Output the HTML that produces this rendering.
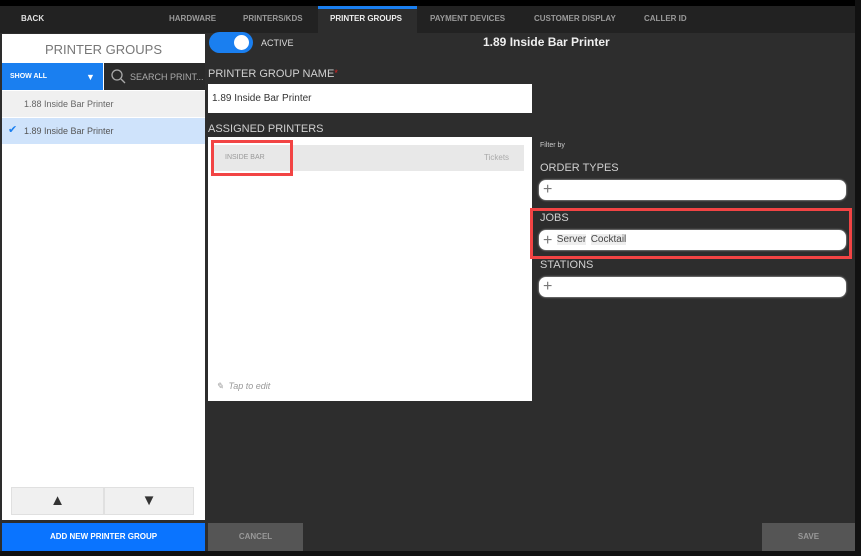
<!DOCTYPE html>
<html><head><style>
*{margin:0;padding:0;box-sizing:border-box}
body{width:861px;height:556px;background:#2d2d2d;font-family:"Liberation Sans",sans-serif;position:relative;overflow:hidden}
.a{position:absolute}
.nav{font-size:8px;font-weight:bold;color:#9a9a9a;top:14px}
.lbl{color:#d0d0d0;font-size:11px}
.pill{background:#fff;border-radius:7px;height:20px;color:#777;font-size:16px;line-height:19px;padding-left:4px;box-shadow:0 0 2px #ccc}
</style></head><body>
<div class="a" style="left:0;top:0;width:861px;height:6px;background:#000"></div>
<div class="a" style="left:0;top:6px;width:861px;height:27px;background:#222"></div>
<div class="a" style="left:855px;top:0;width:6px;height:556px;background:#111"></div>
<div class="a" style="left:0;top:551px;width:861px;height:5px;background:#111"></div>
<div class="a nav" style="left:21px;color:#e0e0e0">BACK</div>
<div class="a nav" style="left:169px">HARDWARE</div>
<div class="a nav" style="left:243px">PRINTERS/KDS</div>
<div class="a" style="left:318px;top:6px;width:99px;height:27px;background:#2d2d2d;border-top:3px solid #1a7ff0"></div>
<div class="a nav" style="left:330px;color:#eee">PRINTER GROUPS</div>
<div class="a nav" style="left:430px">PAYMENT DEVICES</div>
<div class="a nav" style="left:534px">CUSTOMER DISPLAY</div>
<div class="a nav" style="left:644px">CALLER ID</div>

<div class="a" style="left:2px;top:34px;width:203px;height:486px;background:#fff"></div>
<div class="a" style="left:2px;top:42px;width:203px;text-align:center;color:#777;font-size:13px">PRINTER GROUPS</div>
<div class="a" style="left:2px;top:63px;width:101px;height:27px;background:#1a7ff0;color:#fff;font-size:7px;font-weight:bold;padding:10px 0 0 8px">SHOW ALL<span style="position:absolute;left:84px;top:9px;font-size:9px">▼</span></div>
<div class="a" style="left:104px;top:63px;width:101px;height:27px;background:#2a2a2a;color:#aaa;font-size:9px;padding:9px 0 0 26px;white-space:nowrap;overflow:hidden">SEARCH PRINT...</div>
<svg class="a" style="left:110px;top:68px" width="16" height="16"><circle cx="7" cy="7" r="5" fill="none" stroke="#aaa" stroke-width="1.3"/><path d="M11 11l4 4" stroke="#aaa" stroke-width="1.3"/></svg>
<div class="a" style="left:2px;top:91px;width:203px;height:26px;background:#f0f0f0;color:#666;font-size:9px;padding:8px 0 0 22px">1.88 Inside Bar Printer</div>
<div class="a" style="left:2px;top:118px;width:203px;height:26px;background:#cfe3fb;color:#555;font-size:9px;padding:8px 0 0 22px">1.89 Inside Bar Printer</div>
<div class="a" style="left:8px;top:123px;color:#1a7ff0;font-size:11px">✔</div>
<div class="a" style="left:11px;top:487px;width:93px;height:28px;background:#f0f0f0;border:1px solid #e0e0e0;text-align:center;font-size:15px;color:#333;line-height:26px">▲</div>
<div class="a" style="left:104px;top:487px;width:90px;height:28px;background:#f0f0f0;border:1px solid #e0e0e0;text-align:center;font-size:15px;color:#333;line-height:26px">▼</div>
<div class="a" style="left:2px;top:523px;width:203px;height:28px;background:#0a74ff;color:#fff;font-size:8px;font-weight:bold;text-align:center;line-height:28px">ADD NEW PRINTER GROUP</div>
<div class="a" style="left:208px;top:523px;width:95px;height:28px;background:#555;color:#999;font-size:8px;font-weight:bold;text-align:center;line-height:28px">CANCEL</div>
<div class="a" style="left:762px;top:523px;width:93px;height:28px;background:#555;color:#999;font-size:8px;font-weight:bold;text-align:center;line-height:28px">SAVE</div>

<div class="a" style="left:209px;top:32px;width:44px;height:21px;border-radius:11px;background:#1a7ff0"></div>
<div class="a" style="left:234px;top:35px;width:15px;height:15px;border-radius:50%;background:#fff"></div>
<div class="a" style="left:261px;top:38px;color:#ddd;font-size:9px">ACTIVE</div>
<div class="a" style="left:483px;top:35px;color:#eee;font-size:12px;font-weight:bold">1.89 Inside Bar Printer</div>
<div class="a lbl" style="left:208px;top:68px">PRINTER GROUP NAME<span style="color:#d22;font-size:9px;vertical-align:top">*</span></div>
<div class="a" style="left:208px;top:84px;width:324px;height:29px;background:#fff;color:#333;font-size:10px;padding:9px 0 0 4px">1.89 Inside Bar Printer</div>
<div class="a lbl" style="left:208px;top:123px">ASSIGNED PRINTERS</div>
<div class="a" style="left:208px;top:137px;width:324px;height:264px;background:#fff"></div>
<div class="a" style="left:212px;top:145px;width:312px;height:26px;background:#e8e8e8"></div>
<div class="a" style="left:225px;top:154px;color:#999;font-size:7px">INSIDE BAR</div>
<div class="a" style="left:484px;top:153px;color:#aaa;font-size:8px">Tickets</div>
<div class="a" style="left:211px;top:140px;width:82px;height:36px;border:3px solid #f24444"></div>
<div class="a" style="left:216px;top:381px;color:#999;font-size:9px;font-style:italic">✎ &nbsp;Tap to edit</div>

<div class="a" style="left:540px;top:142px;color:#ccc;font-size:7px">Filter by</div>
<div class="a lbl" style="left:540px;top:162px">ORDER TYPES</div>
<div class="a pill" style="left:539px;top:180px;width:307px">+</div>
<div class="a lbl" style="left:540px;top:212px">JOBS</div>
<div class="a pill" style="left:539px;top:230px;width:307px">+ <span style="font-size:10px;color:#444;vertical-align:3px;background:#eee">Server</span> <span style="font-size:10px;color:#444;vertical-align:3px;background:#eee">Cocktail</span></div>
<div class="a" style="left:530px;top:208px;width:322px;height:51px;border:3px solid #f24444"></div>
<div class="a lbl" style="left:540px;top:259px">STATIONS</div>
<div class="a pill" style="left:539px;top:277px;width:307px">+</div>
</body></html>
